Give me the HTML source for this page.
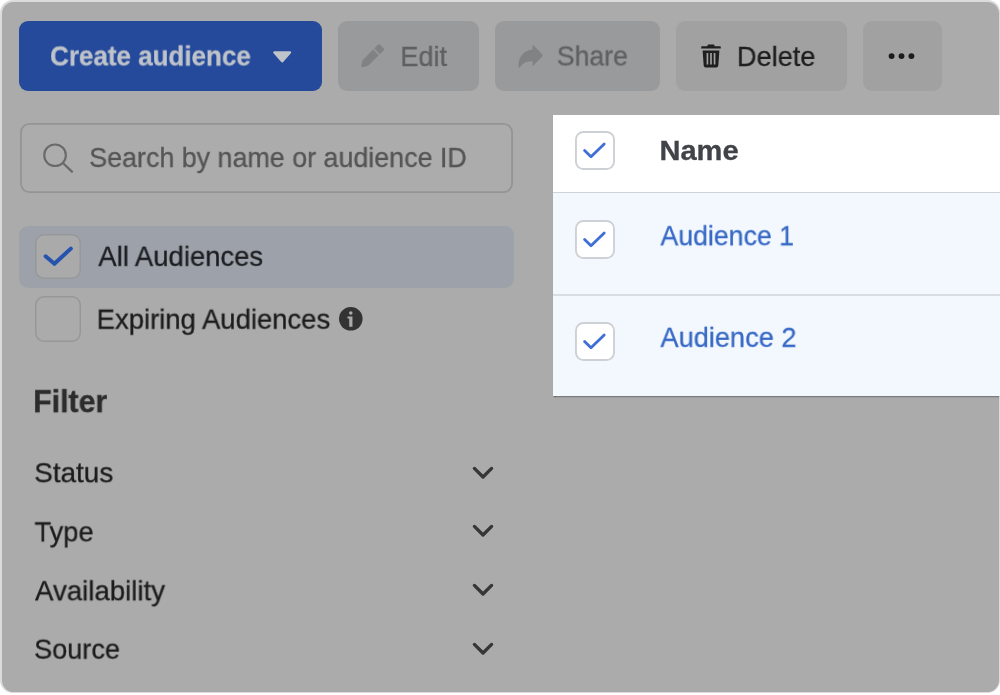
<!DOCTYPE html>
<html>
<head>
<meta charset="utf-8">
<title>Audiences</title>
<style>
*{box-sizing:border-box;margin:0;padding:0}
html,body{width:1000px;height:695px;overflow:hidden;background:#fff}
body{position:relative;font-family:"Liberation Sans",sans-serif;}
.outer{position:absolute;left:0;top:0;width:1000px;height:692.8px;background:#dcdcdc;border-radius:13px 12px 13px 13px}
.panel{position:absolute;left:2.1px;top:2.1px;width:997.1px;height:689.5px;background:#ababab;border-radius:11.5px}
.btn{position:absolute;top:20.6px;height:70.7px;border-radius:9px;background:#a1a1a1}
.btn.dis{background:#999a9b}
.btn.primary{background:#254a9b}
.t{will-change:transform;-webkit-text-stroke:0.3px;position:absolute;white-space:nowrap;line-height:1;font-size:28px;transform-origin:0 0}
.b{font-weight:bold}
svg{position:absolute;overflow:visible}
.search{position:absolute;left:19.6px;top:123.1px;width:493.5px;height:70.2px;box-shadow:inset 0 0 0 1.8px #949494;border-radius:9.5px;background:#acacac}
.rowsel{position:absolute;left:19px;top:226px;width:495px;height:62px;border-radius:9px;background:#9da2aa}
.cb{position:absolute;left:35px;width:45.6px;height:45.6px;box-shadow:inset 0 0 0 1.5px #969799;border-radius:9px;background:#aaa}
.table{position:absolute;left:553.1px;top:114.5px;width:447px;height:281.5px;background:#f3f8fe;box-shadow:0 1.6px 1.2px -0.6px rgba(0,0,0,.5)}
.th{position:absolute;left:0;top:0;width:100%;height:78.5px;background:#fff}
.sep0{position:absolute;left:0;top:77.2px;width:100%;height:1.8px;background:#cfd2d6}
.sep{position:absolute;left:0;top:179.8px;width:100%;height:1.3px;background:#dadde1}
.cb2{position:absolute;left:575.3px;width:39.5px;height:39.4px;box-shadow:inset 0 0 0 1.9px #cdd0d4;border-radius:8.5px;background:#fff}
</style>
</head>
<body>
<div class="outer"></div>
<div class="panel"></div>

<!-- toolbar -->
<div class="btn primary" style="left:18.8px;width:302.8px"></div>
<span class="t b" id="t_create" style="left:0;top:0;transform:translate(50.09px,42.50px) scaleX(0.9276);color:#bfc3ca">Create audience</span>
<svg style="left:273px;top:50.7px" width="19" height="12" viewBox="0 0 19 12"><path d="M1.5 1.5 H16.9 L9.2 10.1 Z" fill="#bfc3ca" stroke="#bfc3ca" stroke-width="2.6" stroke-linejoin="round"/></svg>

<div class="btn dis" style="left:337.7px;width:141.2px"></div>
<svg style="left:360.7px;top:44.2px" width="24" height="24" viewBox="0 0 24 24"><g transform="translate(0.4 23) rotate(-45)" fill="#808284"><path d="M0.3 0 Q0 -0.5 0.6 -0.9 L5.6 -4 H20.6 V4 H5.6 L0.6 0.9 Q0 0.5 0.3 0 Z"/><path d="M22.2 -4 H27.4 Q28.9 -4 28.9 -2.5 V2.5 Q28.9 4 27.4 4 H22.2 Z"/></g></svg>
<span class="t" id="t_edit" style="color:#5f6062;left:0;top:0;transform:translate(400.28px,43.00px) scaleX(0.9684);">Edit</span>

<div class="btn dis" style="left:494.8px;width:165px"></div>
<svg style="left:517.5px;top:45px" width="25" height="23" viewBox="0 0 25 23"><path d="M14.6 0.5 Q14.6 -0.7 15.5 0.2 L24.4 9.6 Q25 10.4 24.4 11.2 L15.5 20.6 Q14.6 21.5 14.6 20.3 V16.2 C9 16 4.5 18 1.4 22.6 Q0.6 23.5 0.5 22.3 C0 13 5 5.4 14.6 4.6 Z" fill="#808284"/></svg>
<span class="t" id="t_share" style="color:#5f6062;left:0;top:0;transform:translate(556.81px,42.50px) scaleX(0.9501);">Share</span>

<div class="btn" style="left:675.8px;width:170.9px"></div>
<svg style="left:701px;top:44px" width="20" height="24" viewBox="0 0 20 24"><path d="M7 0.5 H13 L13.8 2.3 H19 Q19.8 2.3 19.8 3.2 V4.6 H0.2 V3.2 Q0.2 2.3 1 2.3 H6.2 Z M1.6 6.4 H18.4 L17.3 21.6 Q17.1 23.6 15.2 23.6 H4.8 Q2.9 23.6 2.7 21.6 Z M5.6 9 V20.6 H7.3 V9 Z M9.15 9 V20.6 H10.85 V9 Z M12.7 9 V20.6 H14.4 V9 Z" fill="#1f1f1f" fill-rule="evenodd"/></svg>
<span class="t" id="t_delete" style="left:0;top:0;transform:translate(736.92px,43.00px) scaleX(0.9710);color:#1f1f1f">Delete</span>

<div class="btn" style="left:862.8px;width:78.8px"></div>
<svg style="left:888px;top:52px" width="27" height="8" viewBox="0 0 27 8"><circle cx="3.6" cy="4.1" r="2.95" fill="#1c1c1c"/><circle cx="13.5" cy="4.1" r="2.95" fill="#1c1c1c"/><circle cx="23.4" cy="4.1" r="2.95" fill="#1c1c1c"/></svg>

<!-- search -->
<div class="search"></div>
<svg style="left:42px;top:143px" width="32" height="32" viewBox="0 0 32 32"><circle cx="13.05" cy="12.25" r="10.8" fill="none" stroke="#6a6a6a" stroke-width="2.1"/><path d="M20.9 20 L29.9 28.6" stroke="#6a6a6a" stroke-width="2.4" stroke-linecap="round"/></svg>
<span class="t" id="t_search" style="color:#555;left:0;top:0;transform:translate(89.20px,144.05px) scaleX(0.9589);">Search by name or audience ID</span>

<!-- list -->
<div class="rowsel"></div>
<div class="cb" style="top:233.8px"></div>
<svg style="left:35px;top:234px" width="46" height="46" viewBox="0 0 46 46"><path d="M10.6 22.3 L19.4 29.8 L35.8 14.6" fill="none" stroke="#2653ae" stroke-width="4" stroke-linecap="round" stroke-linejoin="round"/></svg>
<span class="t" id="t_all" style="left:0;top:0;transform:translate(98.30px,242.85px) scaleX(0.9808);color:#1c1e21">All Audiences</span>
<div class="cb" style="top:296.4px;background:#ababab"></div>
<span class="t" id="t_exp" style="left:0;top:0;transform:translate(96.64px,305.70px) scaleX(0.9807);color:#1c1c1c">Expiring Audiences</span>
<svg style="left:339.3px;top:307.4px" width="23.6" height="23.6" viewBox="0 0 24 24"><circle cx="12" cy="12" r="12" fill="#333"/><circle cx="12" cy="6" r="1.8" fill="#ababab"/><path d="M8.6 9.7 H13.7 V20.2 H10.4 V11.7 H8.6 Z" fill="#ababab"/></svg>

<span class="t b" id="t_filter" style="left:0;top:0;transform:translate(33.18px,385.15px) scaleX(0.9465);font-size:32px;color:#2c2c2c">Filter</span>
<span class="t" id="t_status" style="left:0;top:0;transform:translate(34.21px,459.20px) scaleX(0.9948);color:#1c1c1c">Status</span>
<span class="t" id="t_type" style="left:0;top:0;transform:translate(34.52px,518.35px) scaleX(0.9719);color:#1c1c1c">Type</span>
<span class="t" id="t_avail" style="left:0;top:0;transform:translate(35.00px,577.30px) scaleX(0.9867);color:#1c1c1c">Availability</span>
<span class="t" id="t_source" style="left:0;top:0;transform:translate(34.09px,635.65px) scaleX(0.9671);color:#1c1c1c">Source</span>
<svg style="left:471.8px;top:465.5px" width="22" height="14" viewBox="0 0 22 14"><path d="M2.4 2.4 L11 11 L19.6 2.4" fill="none" stroke="#363636" stroke-width="3.3" stroke-linecap="round" stroke-linejoin="round"/></svg>
<svg style="left:471.8px;top:524.4px" width="22" height="14" viewBox="0 0 22 14"><path d="M2.4 2.4 L11 11 L19.6 2.4" fill="none" stroke="#363636" stroke-width="3.3" stroke-linecap="round" stroke-linejoin="round"/></svg>
<svg style="left:471.8px;top:583.3px" width="22" height="14" viewBox="0 0 22 14"><path d="M2.4 2.4 L11 11 L19.6 2.4" fill="none" stroke="#363636" stroke-width="3.3" stroke-linecap="round" stroke-linejoin="round"/></svg>
<svg style="left:471.8px;top:642.2px" width="22" height="14" viewBox="0 0 22 14"><path d="M2.4 2.4 L11 11 L19.6 2.4" fill="none" stroke="#363636" stroke-width="3.3" stroke-linecap="round" stroke-linejoin="round"/></svg>

<!-- table -->
<div class="table"><div class="th"></div><div class="sep0"></div><div class="sep"></div></div>
<div class="cb2" style="top:130.9px"></div>
<svg style="left:575.3px;top:130.9px" width="39" height="39" viewBox="0 0 39 39"><path d="M9.6 19.5 L16 25.8 L29.2 13" fill="none" stroke="#3f6fd6" stroke-width="2.8" stroke-linecap="round" stroke-linejoin="round"/></svg>
<span class="t b" id="t_name" style="left:0;top:0;transform:translate(659.47px,137.00px) scaleX(1.0376);color:#404347">Name</span>
<div class="cb2" style="top:219.5px"></div>
<svg style="left:575.3px;top:219.5px" width="39" height="39" viewBox="0 0 39 39"><path d="M9.6 19.5 L16 25.8 L29.2 13" fill="none" stroke="#3f6fd6" stroke-width="2.8" stroke-linecap="round" stroke-linejoin="round"/></svg>
<span class="t" id="t_a1" style="left:0;top:0;transform:translate(660.45px,222.20px) scaleX(0.9532);color:#3769c5">Audience 1</span>
<div class="cb2" style="top:321.6px"></div>
<svg style="left:575.3px;top:321.6px" width="39" height="39" viewBox="0 0 39 39"><path d="M9.6 19.5 L16 25.8 L29.2 13" fill="none" stroke="#3f6fd6" stroke-width="2.8" stroke-linecap="round" stroke-linejoin="round"/></svg>
<span class="t" id="t_a2" style="left:0;top:0;transform:translate(660.45px,323.85px) scaleX(0.9712);color:#3769c5">Audience 2</span>
</body>
</html>
